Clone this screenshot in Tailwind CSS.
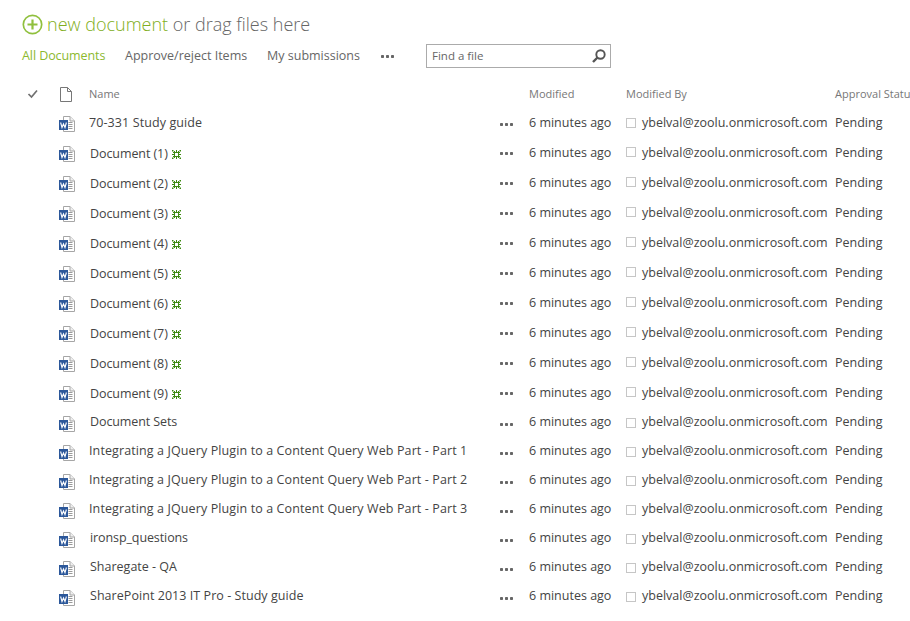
<!DOCTYPE html>
<html lang="en">
<head>
    <meta charset="UTF-8">
    <title>Documents</title>
    <script src="https://cdn.jsdelivr.net/npm/@tailwindcss/browser@4"></script>
</head>
<body class="bg-white font-['Open_Sans',sans-serif] text-[#444] w-[910px] h-[621px] overflow-hidden">
    <svg class="hidden">
        <symbol id="word" viewBox="0 0 16 16">
            <path d="M4.5.5H11L15.5 5V15.5H4.5Z" fill="#fff" stroke="#a6a6a6"/>
            <path d="M11 .5V5H15.5" fill="#f0f0f0" stroke="#a6a6a6"/>
            <path d="M9.5 6.5H13.5M9.5 8.5H13.5M9.5 10.5H13.5M9.5 12.5H13.5" stroke="#9a9a9a"/>
            <rect x="0" y="4" width="9" height="10" fill="#2b579a"/>
            <path d="M1.6 6.5L3 11.5L4.5 8L6 11.5L7.4 6.5" fill="none" stroke="#fff" stroke-width="1.1"/>
        </symbol>
        <symbol id="newdoc" viewBox="0 0 9 9">
            <path d="M2.5 1V8M6.5 1V8M1 2.5H8M1 6.5H8" stroke="#3d8a12" stroke-width="1"/>
            <path d="M0 0H1.5V1.5H0ZM7.5 0H9V1.5H7.5ZM0 7.5H1.5V9H0ZM7.5 7.5H9V9H7.5ZM4 0H5V2H4ZM4 7H5V9H4ZM0 4H2V5H0ZM7 4H9V5H7Z" fill="#3d8a12"/>
        </symbol>
        <symbol id="dots" viewBox="0 0 13 3">
            <rect x="0" y="0" width="3" height="3" rx=".7" fill="#666"/>
            <rect x="5" y="0" width="3" height="3" rx=".7" fill="#666"/>
            <rect x="10" y="0" width="3" height="3" rx=".7" fill="#666"/>
        </symbol>
    </svg>

    <div class="pl-[22px] pt-[12px] h-[36px] flex items-center gap-[4px] text-[18px] leading-[24px] font-light">
        <svg class="size-[21px] shrink-0" viewBox="0 0 21 21"><circle cx="10.5" cy="10.5" r="9.2" fill="none" stroke="#90c03e" stroke-width="1.7"/><path d="M10.5 5.5V15.5M5.5 10.5H15.5" stroke="#90c03e" stroke-width="2.2"/></svg>
        <span><span class="text-[#7fae22]">new document</span> <span class="text-[#666]">or drag files here</span></span>
    </div>

    <div class="pl-[22px] mt-[8px] h-[24px] flex items-center text-[12.5px] text-[#666]">
        <span class="text-[#8cb92f] w-[103px] tracking-[-0.08px]">All Documents</span>
        <span class="w-[142px]">Approve/reject Items</span>
        <span class="w-[114px]">My submissions</span>
        <span class="w-[45px]"><svg class="w-[13px] h-[3px] mt-[1px]"><use href="#dots"/></svg></span>
        <div class="w-[185px] h-[24px] border border-[#ababab] flex items-center justify-between pl-[5px] pr-[3px] text-[#666] text-[11.5px]">
            <span>Find a file</span>
            <svg class="size-[16px]" viewBox="0 0 16 16"><circle cx="9.5" cy="6.5" r="4.2" fill="none" stroke="#555" stroke-width="1.9"/><path d="M6.5 9.5L2 14" stroke="#555" stroke-width="2.4"/></svg>
        </div>
    </div>

    <div class="mt-[14px] h-[24px] flex items-center text-[11px] text-[#777]">
        <div class="w-[27px] shrink-0"></div>
        <svg class="w-[12px] h-[10px] shrink-0" viewBox="0 0 12 10"><path d="M1.5 5L4.5 8L10 1.5" fill="none" stroke="#707070" stroke-width="1.7"/></svg>
        <div class="w-[21px] shrink-0"></div>
        <svg class="w-[12px] h-[15px] shrink-0" viewBox="0 0 12 15"><path d="M.5.5H7.5L11.5 4.5V14.5H.5ZM7.5.5V4.5H11.5" fill="none" stroke="#777"/></svg>
        <div class="w-[17px] shrink-0"></div>
        <div class="w-[440px] shrink-0">Name</div>
        <div class="w-[97px] shrink-0">Modified</div>
        <div class="w-[209px] shrink-0">Modified By</div>
        <div class="whitespace-nowrap">Approval Status</div>
    </div>

    <div class="pt-[2px] text-[12.5px] text-[#444]">
        <div class="h-[30px] flex items-center">
            <svg class="ml-[59px] mt-[2px] size-[16px] shrink-0"><use href="#word"/></svg>
            <div class="ml-[14px] w-[410px] shrink-0 tracking-[0.1px]">70-331 Study guide</div>
            <div class="w-[30px] shrink-0"><svg class="w-[13px] h-[3px] mt-[3px] ml-[1px]"><use href="#dots"/></svg></div>
            <div class="w-[97px] shrink-0">6 minutes ago</div>
            <div class="size-[10px] border border-[#c6c6c6] shrink-0"></div>
            <div class="ml-[6px] w-[193px] shrink-0">ybelval@zoolu.onmicrosoft.com</div>
            <div>Pending</div>
        </div>
        <div class="h-[30px] flex items-center">
            <svg class="ml-[59px] mt-[2px] size-[16px] shrink-0"><use href="#word"/></svg>
            <div class="ml-[15px] mt-[2px] w-[409px] shrink-0 flex items-center gap-[4px] tracking-[-0.08px]">Document (1) <svg class="size-[9px]"><use href="#newdoc"/></svg></div>
            <div class="w-[30px] shrink-0"><svg class="w-[13px] h-[3px] mt-[1px] ml-[1px]"><use href="#dots"/></svg></div>
            <div class="w-[97px] shrink-0">6 minutes ago</div>
            <div class="size-[10px] -mt-[2px] border border-[#c6c6c6] shrink-0"></div>
            <div class="ml-[6px] w-[193px] shrink-0">ybelval@zoolu.onmicrosoft.com</div>
            <div>Pending</div>
        </div>
        <div class="h-[30px] flex items-center">
            <svg class="ml-[59px] mt-[2px] size-[16px] shrink-0"><use href="#word"/></svg>
            <div class="ml-[15px] mt-[2px] w-[409px] shrink-0 flex items-center gap-[4px] tracking-[-0.08px]">Document (2) <svg class="size-[9px]"><use href="#newdoc"/></svg></div>
            <div class="w-[30px] shrink-0"><svg class="w-[13px] h-[3px] mt-[1px] ml-[1px]"><use href="#dots"/></svg></div>
            <div class="w-[97px] shrink-0">6 minutes ago</div>
            <div class="size-[10px] -mt-[2px] border border-[#c6c6c6] shrink-0"></div>
            <div class="ml-[6px] w-[193px] shrink-0">ybelval@zoolu.onmicrosoft.com</div>
            <div>Pending</div>
        </div>
        <div class="h-[30px] flex items-center">
            <svg class="ml-[59px] mt-[2px] size-[16px] shrink-0"><use href="#word"/></svg>
            <div class="ml-[15px] mt-[2px] w-[409px] shrink-0 flex items-center gap-[4px] tracking-[-0.08px]">Document (3) <svg class="size-[9px]"><use href="#newdoc"/></svg></div>
            <div class="w-[30px] shrink-0"><svg class="w-[13px] h-[3px] mt-[1px] ml-[1px]"><use href="#dots"/></svg></div>
            <div class="w-[97px] shrink-0">6 minutes ago</div>
            <div class="size-[10px] -mt-[2px] border border-[#c6c6c6] shrink-0"></div>
            <div class="ml-[6px] w-[193px] shrink-0">ybelval@zoolu.onmicrosoft.com</div>
            <div>Pending</div>
        </div>
        <div class="h-[30px] flex items-center">
            <svg class="ml-[59px] mt-[2px] size-[16px] shrink-0"><use href="#word"/></svg>
            <div class="ml-[15px] mt-[2px] w-[409px] shrink-0 flex items-center gap-[4px] tracking-[-0.08px]">Document (4) <svg class="size-[9px]"><use href="#newdoc"/></svg></div>
            <div class="w-[30px] shrink-0"><svg class="w-[13px] h-[3px] mt-[1px] ml-[1px]"><use href="#dots"/></svg></div>
            <div class="w-[97px] shrink-0">6 minutes ago</div>
            <div class="size-[10px] -mt-[2px] border border-[#c6c6c6] shrink-0"></div>
            <div class="ml-[6px] w-[193px] shrink-0">ybelval@zoolu.onmicrosoft.com</div>
            <div>Pending</div>
        </div>
        <div class="h-[30px] flex items-center">
            <svg class="ml-[59px] mt-[2px] size-[16px] shrink-0"><use href="#word"/></svg>
            <div class="ml-[15px] mt-[2px] w-[409px] shrink-0 flex items-center gap-[4px] tracking-[-0.08px]">Document (5) <svg class="size-[9px]"><use href="#newdoc"/></svg></div>
            <div class="w-[30px] shrink-0"><svg class="w-[13px] h-[3px] mt-[1px] ml-[1px]"><use href="#dots"/></svg></div>
            <div class="w-[97px] shrink-0">6 minutes ago</div>
            <div class="size-[10px] -mt-[2px] border border-[#c6c6c6] shrink-0"></div>
            <div class="ml-[6px] w-[193px] shrink-0">ybelval@zoolu.onmicrosoft.com</div>
            <div>Pending</div>
        </div>
        <div class="h-[30px] flex items-center">
            <svg class="ml-[59px] mt-[2px] size-[16px] shrink-0"><use href="#word"/></svg>
            <div class="ml-[15px] mt-[2px] w-[409px] shrink-0 flex items-center gap-[4px] tracking-[-0.08px]">Document (6) <svg class="size-[9px]"><use href="#newdoc"/></svg></div>
            <div class="w-[30px] shrink-0"><svg class="w-[13px] h-[3px] mt-[1px] ml-[1px]"><use href="#dots"/></svg></div>
            <div class="w-[97px] shrink-0">6 minutes ago</div>
            <div class="size-[10px] -mt-[2px] border border-[#c6c6c6] shrink-0"></div>
            <div class="ml-[6px] w-[193px] shrink-0">ybelval@zoolu.onmicrosoft.com</div>
            <div>Pending</div>
        </div>
        <div class="h-[30px] flex items-center">
            <svg class="ml-[59px] mt-[2px] size-[16px] shrink-0"><use href="#word"/></svg>
            <div class="ml-[15px] mt-[2px] w-[409px] shrink-0 flex items-center gap-[4px] tracking-[-0.08px]">Document (7) <svg class="size-[9px]"><use href="#newdoc"/></svg></div>
            <div class="w-[30px] shrink-0"><svg class="w-[13px] h-[3px] mt-[1px] ml-[1px]"><use href="#dots"/></svg></div>
            <div class="w-[97px] shrink-0">6 minutes ago</div>
            <div class="size-[10px] -mt-[2px] border border-[#c6c6c6] shrink-0"></div>
            <div class="ml-[6px] w-[193px] shrink-0">ybelval@zoolu.onmicrosoft.com</div>
            <div>Pending</div>
        </div>
        <div class="h-[30px] flex items-center">
            <svg class="ml-[59px] mt-[2px] size-[16px] shrink-0"><use href="#word"/></svg>
            <div class="ml-[15px] mt-[2px] w-[409px] shrink-0 flex items-center gap-[4px] tracking-[-0.08px]">Document (8) <svg class="size-[9px]"><use href="#newdoc"/></svg></div>
            <div class="w-[30px] shrink-0"><svg class="w-[13px] h-[3px] mt-[1px] ml-[1px]"><use href="#dots"/></svg></div>
            <div class="w-[97px] shrink-0">6 minutes ago</div>
            <div class="size-[10px] -mt-[2px] border border-[#c6c6c6] shrink-0"></div>
            <div class="ml-[6px] w-[193px] shrink-0">ybelval@zoolu.onmicrosoft.com</div>
            <div>Pending</div>
        </div>
        <div class="h-[30px] flex items-center">
            <svg class="ml-[59px] mt-[2px] size-[16px] shrink-0"><use href="#word"/></svg>
            <div class="ml-[15px] mt-[2px] w-[409px] shrink-0 flex items-center gap-[4px] tracking-[-0.08px]">Document (9) <svg class="size-[9px]"><use href="#newdoc"/></svg></div>
            <div class="w-[30px] shrink-0"><svg class="w-[13px] h-[3px] mt-[1px] ml-[1px]"><use href="#dots"/></svg></div>
            <div class="w-[97px] shrink-0">6 minutes ago</div>
            <div class="size-[10px] -mt-[2px] border border-[#c6c6c6] shrink-0"></div>
            <div class="ml-[6px] w-[193px] shrink-0">ybelval@zoolu.onmicrosoft.com</div>
            <div>Pending</div>
        </div>
        <div class="h-[29px] flex items-center">
            <svg class="ml-[59px] mt-[2px] size-[16px] shrink-0"><use href="#word"/></svg>
            <div class="ml-[15px] w-[409px] shrink-0 tracking-[-0.1px]">Document Sets</div>
            <div class="w-[30px] shrink-0"><svg class="w-[13px] h-[3px] mt-[3px] ml-[1px]"><use href="#dots"/></svg></div>
            <div class="w-[97px] shrink-0">6 minutes ago</div>
            <div class="size-[10px] border border-[#c6c6c6] shrink-0"></div>
            <div class="ml-[6px] w-[193px] shrink-0">ybelval@zoolu.onmicrosoft.com</div>
            <div>Pending</div>
        </div>
        <div class="h-[29px] flex items-center">
            <svg class="ml-[59px] mt-[2px] size-[16px] shrink-0"><use href="#word"/></svg>
            <div class="ml-[14px] w-[410px] shrink-0 tracking-[0.11px]">Integrating a JQuery Plugin to a Content Query Web Part - Part 1</div>
            <div class="w-[30px] shrink-0"><svg class="w-[13px] h-[3px] mt-[3px] ml-[1px]"><use href="#dots"/></svg></div>
            <div class="w-[97px] shrink-0">6 minutes ago</div>
            <div class="size-[10px] border border-[#c6c6c6] shrink-0"></div>
            <div class="ml-[6px] w-[193px] shrink-0">ybelval@zoolu.onmicrosoft.com</div>
            <div>Pending</div>
        </div>
        <div class="h-[29px] flex items-center">
            <svg class="ml-[59px] mt-[2px] size-[16px] shrink-0"><use href="#word"/></svg>
            <div class="ml-[14px] w-[410px] shrink-0 tracking-[0.11px]">Integrating a JQuery Plugin to a Content Query Web Part - Part 2</div>
            <div class="w-[30px] shrink-0"><svg class="w-[13px] h-[3px] mt-[3px] ml-[1px]"><use href="#dots"/></svg></div>
            <div class="w-[97px] shrink-0">6 minutes ago</div>
            <div class="size-[10px] border border-[#c6c6c6] shrink-0"></div>
            <div class="ml-[6px] w-[193px] shrink-0">ybelval@zoolu.onmicrosoft.com</div>
            <div>Pending</div>
        </div>
        <div class="h-[29px] flex items-center">
            <svg class="ml-[59px] mt-[2px] size-[16px] shrink-0"><use href="#word"/></svg>
            <div class="ml-[14px] w-[410px] shrink-0 tracking-[0.11px]">Integrating a JQuery Plugin to a Content Query Web Part - Part 3</div>
            <div class="w-[30px] shrink-0"><svg class="w-[13px] h-[3px] mt-[3px] ml-[1px]"><use href="#dots"/></svg></div>
            <div class="w-[97px] shrink-0">6 minutes ago</div>
            <div class="size-[10px] border border-[#c6c6c6] shrink-0"></div>
            <div class="ml-[6px] w-[193px] shrink-0">ybelval@zoolu.onmicrosoft.com</div>
            <div>Pending</div>
        </div>
        <div class="h-[29px] flex items-center">
            <svg class="ml-[59px] mt-[2px] size-[16px] shrink-0"><use href="#word"/></svg>
            <div class="ml-[15px] w-[409px] shrink-0 tracking-[-0.1px]">ironsp_questions</div>
            <div class="w-[30px] shrink-0"><svg class="w-[13px] h-[3px] mt-[3px] ml-[1px]"><use href="#dots"/></svg></div>
            <div class="w-[97px] shrink-0">6 minutes ago</div>
            <div class="size-[10px] border border-[#c6c6c6] shrink-0"></div>
            <div class="ml-[6px] w-[193px] shrink-0">ybelval@zoolu.onmicrosoft.com</div>
            <div>Pending</div>
        </div>
        <div class="h-[29px] flex items-center">
            <svg class="ml-[59px] mt-[2px] size-[16px] shrink-0"><use href="#word"/></svg>
            <div class="ml-[15px] w-[409px] shrink-0">Sharegate - QA</div>
            <div class="w-[30px] shrink-0"><svg class="w-[13px] h-[3px] mt-[3px] ml-[1px]"><use href="#dots"/></svg></div>
            <div class="w-[97px] shrink-0">6 minutes ago</div>
            <div class="size-[10px] border border-[#c6c6c6] shrink-0"></div>
            <div class="ml-[6px] w-[193px] shrink-0">ybelval@zoolu.onmicrosoft.com</div>
            <div>Pending</div>
        </div>
        <div class="h-[29px] flex items-center">
            <svg class="ml-[59px] mt-[2px] size-[16px] shrink-0"><use href="#word"/></svg>
            <div class="ml-[15px] w-[409px] shrink-0 tracking-[0.05px]">SharePoint 2013 IT Pro - Study guide</div>
            <div class="w-[30px] shrink-0"><svg class="w-[13px] h-[3px] mt-[3px] ml-[1px]"><use href="#dots"/></svg></div>
            <div class="w-[97px] shrink-0">6 minutes ago</div>
            <div class="size-[10px] border border-[#c6c6c6] shrink-0"></div>
            <div class="ml-[6px] w-[193px] shrink-0">ybelval@zoolu.onmicrosoft.com</div>
            <div>Pending</div>
        </div>
    </div>
</body>
</html>
